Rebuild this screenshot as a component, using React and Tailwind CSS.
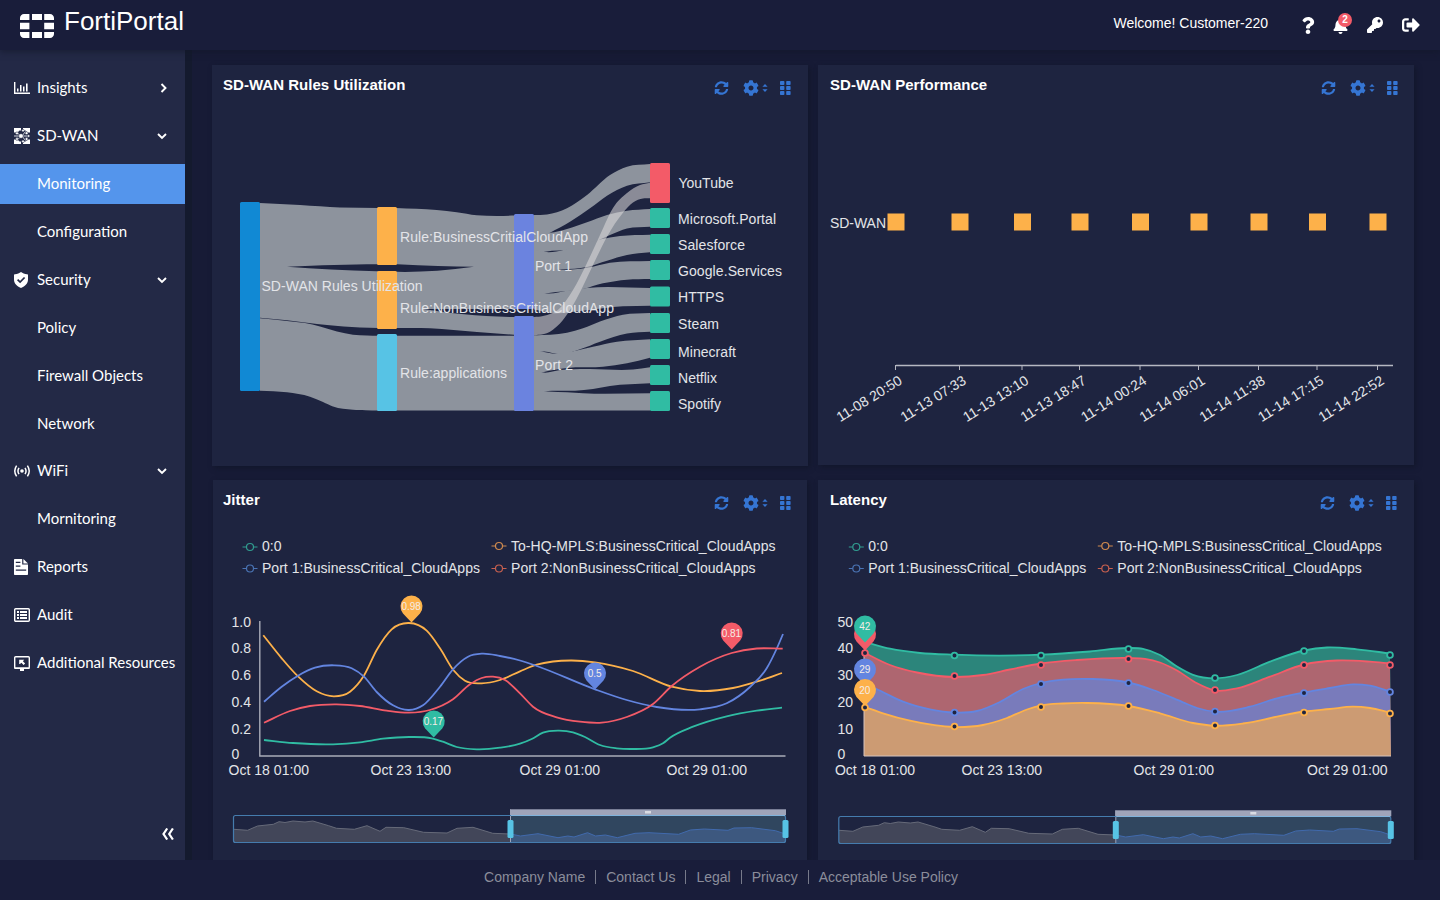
import { FaQuestion, FaBell, FaKey, FaSignOutAlt, FaSyncAlt, FaCog } from 'react-icons/fa';

// Smooth curve through a list of [x, y] points, ordered by x
const slope = (points, i) => {
  const at = (j) => (points[j + 1][1] - points[j][1]) / (points[j + 1][0] - points[j][0]);
  if (i === 0) return at(0);
  if (i === points.length - 1) return at(i - 1);
  const before = points[i][0] - points[i - 1][0];
  const after = points[i + 1][0] - points[i][0];
  return (at(i - 1) * after + at(i) * before) / (before + after);
};

const curve = (points) =>
  points
    .slice(1)
    .map(([x, y], i) => {
      const [x1, y1] = points[i];
      const h = (x - x1) / 3;
      return `C${x1 + h} ${y1 + h * slope(points, i)} ${x - h} ${y - h * slope(points, i + 1)} ${x} ${y}`;
    })
    .join(' ');

const line = (points) => `M${points[0].join(' ')} ${curve(points)}`;

const band = (top, bottom) => {
  const back = [...bottom].reverse();
  return `${line(top)} L${back[0].join(' ')} ${curve(back)} Z`;
};

const COLORS = {
  teal: '#30bca3',
  orange: '#fdb14a',
  blue: '#6385e0',
  red: '#f35b68',
};

/* ---------- sidebar icons ---------- */

const InsightsIcon = () => (
  <svg width="16" height="16" viewBox="0 0 16 16" fill="currentColor">
    <path d="M0 2h1.4v10.600H16V14H0z" />
    <path d="M3 8.600h1.500v3H3zM6 5h1.500v6.600H6zM9 6.600h1.500v5H9zM12 3.400h1.600v8.200H12z" />
  </svg>
);

const SdwanIcon = () => (
  <svg width="16" height="16" viewBox="0 0 16 16">
    <path
      d="M0 0h7v2.500H5.500L3.500 4.600H0zM9 0h7v4.600h-2.500L11.500 2.500H9zM0 11.400h3.500l2 2.100H7V16H0zM16 11.400h-2.500l-2 2.100H9V16h7z"
      fill="#fff"
    />
    <path d="M8 8L3 5M8 8H0M8 8l-5 3.500M8 8l3.500-4.500M8 8h7M8 8l3.500 4.500" stroke="#d5d8e0" strokeWidth="1" />
    <g fill="#fff" stroke="#232946" strokeWidth=".5">
      <circle cx="7" cy="8" r="2.300" />
      <circle cx="3" cy="5.300" r="1.400" />
      <circle cx="3" cy="11" r="1.400" />
      <circle cx="9" cy="2.600" r="1.300" />
      <circle cx="9" cy="13.400" r="1.300" />
      <circle cx="12.600" cy="5.200" r="1.400" />
      <circle cx="12.600" cy="11" r="1.400" />
      <circle cx="14.600" cy="8" r="1.200" />
    </g>
  </svg>
);

const ShieldIcon = () => (
  <svg width="14" height="16" viewBox="0 0 14 16" fill="none">
    <path
      d="M7 0c1.600 1.200 3.600 2 6 2.200.600 0 1 .400 1 1V7.600c0 3.800-2.800 6.900-7 8.400-4.200-1.500-7-4.600-7-8.400V3.200c0-.600.400-1 1-1C3.400 2 5.400 1.200 7 0z"
      fill="currentColor"
    />
    <path d="M3.600 7.600l2.500 2.500 4.500-4.600" stroke="#232946" strokeWidth="1.700" />
  </svg>
);

const WifiIcon = () => (
  <svg width="16" height="12" viewBox="0 0 16 12" fill="none" stroke="currentColor" strokeWidth="1.500">
    <circle cx="8" cy="6" r="1.800" fill="currentColor" stroke="none" />
    <path d="M5 2.800c-1.300 2-1.300 4.400 0 6.400M11 2.800c1.300 2 1.300 4.400 0 6.400M2.600.600c-2.300 3.400-2.300 7.400 0 10.800M13.400.600c2.300 3.400 2.300 7.400 0 10.800" />
  </svg>
);

const ReportsIcon = () => (
  <svg width="14" height="16" viewBox="0 0 14 16" fill="none">
    <path d="M1 0h7.200v5.600H14V15c0 .600-.400 1-1 1H1c-.600 0-1-.400-1-1V1c0-.600.400-1 1-1z" fill="currentColor" />
    <path d="M9.400 0L14 4.500H9.400z" fill="currentColor" />
    <path d="M1.800 3.400h4.600M1.800 7.200h4.600M1.800 11.200h10.400" stroke="#232946" strokeWidth="1.200" />
  </svg>
);

const AuditIcon = () => (
  <svg width="16" height="14" viewBox="0 0 16 14" fill="none" stroke="currentColor">
    <rect x=".700" y=".700" width="14.600" height="12.600" rx="1" strokeWidth="1.400" />
    <path d="M3 4h2M3 7h2M3 10h2M6 4h7M6 7h7M6 10h7" strokeWidth="1.900" />
  </svg>
);

const ResourcesIcon = () => (
  <svg width="16" height="15" viewBox="0 0 16 15" fill="none">
    <rect x=".700" y=".700" width="14.600" height="11.600" rx="1" stroke="currentColor" strokeWidth="1.400" />
    <path d="M.500 11.400h15v1.500H.500zM6 12.500h4V15H6z" fill="currentColor" />
    <path d="M5.200 3.800h5L8.900 5.200l2.200 2.200-1.500 1.500-2.200-2.200-1.400 1.300-.800.100z" fill="currentColor" />
  </svg>
);

const MENU = [
  { label: 'Insights', icon: InsightsIcon, arrow: 'right' },
  { label: 'SD-WAN', icon: SdwanIcon, arrow: 'down' },
  { label: 'Monitoring', active: true },
  { label: 'Configuration' },
  { label: 'Security', icon: ShieldIcon, arrow: 'down' },
  { label: 'Policy' },
  { label: 'Firewall Objects' },
  { label: 'Network' },
  { label: 'WiFi', icon: WifiIcon, arrow: 'down' },
  { label: 'Mornitoring' },
  { label: 'Reports', icon: ReportsIcon },
  { label: 'Audit', icon: AuditIcon },
  { label: 'Additional Resources', icon: ResourcesIcon },
];

const MenuArrow = ({ direction }) => (
  <svg width="10" height="10" viewBox="0 0 10 10" fill="none" stroke="currentColor" strokeWidth="1.900">
    <path d={direction === 'right' ? 'M4.500 1L8.500 5l-4 4' : 'M1 3l4 3.900L9 3'} />
  </svg>
);

const Logo = () => (
  <svg width="34" height="24" viewBox="0 0 34 24" fill="#fff">
    <path d="M4 0h5.400v6H0V4c0-2.200 1.800-4 4-4zM12 0h10v6H12zM24.200 0H30c2.200 0 4 1.800 4 4v2h-9.800zM0 8.700h9.400v6.600H0zM24.200 8.700H34v6.600h-9.800zM0 18h9.400v6H4c-2.200 0-4-1.800-4-4zM12 18h10v6H12zM24.200 18H34v2c0 2.200-1.800 4-4 4h-5.800z" />
  </svg>
);

const Header = () => (
  <header className="relative z-10 flex h-[50px] shrink-0 items-center justify-between bg-[#191d3a] pl-5 pr-5 shadow-[0_2px_6px_rgba(18,24,40,0.6)]">
    <div className="flex items-center gap-[10px]">
      <div className="pt-[2px]">
        <Logo />
      </div>
      <span className="pb-[9px] text-[26px] leading-none">FortiPortal</span>
    </div>
    <div className="flex items-center">
      <span className="mr-[32px] pb-[3px] text-[14px]">Welcome! Customer-220</span>
      <FaQuestion className="mr-[17px] h-[17px] w-[16px]" />
      <div className="relative mr-[19px]">
        <FaBell className="mt-px h-[16px] w-[15px]" />
        <span className="absolute -top-[4px] left-[5px] flex h-[14px] w-[14px] items-center justify-center rounded-full bg-[#f35b68] text-[10px] font-bold leading-none">
          2
        </span>
      </div>
      <FaKey className="mr-[19px] h-4 w-4" />
      <FaSignOutAlt className="h-[18px] w-[18px]" />
    </div>
  </header>
);

const Sidebar = () => (
  <aside className="flex w-[185px] shrink-0 flex-col bg-[#232946] pt-[14px] font-['Lato',sans-serif] text-[15px]">
    {MENU.map(({ label, icon: Icon, active, arrow }) => (
      <div key={label} className={label === 'WiFi' ? '-mt-px h-12 py-1' : 'h-12 py-1'}>
        <div className={`flex h-10 items-center pl-[14px] pr-[18px] ${active ? 'bg-[#5495ec]' : ''}`}>
          <span className="flex w-[23px] shrink-0">{Icon && <Icon />}</span>
          <span className="flex-1 whitespace-nowrap pb-[2px]">{label}</span>
          {arrow && <MenuArrow direction={arrow} />}
        </div>
      </div>
    ))}
    <svg className="mb-5 ml-auto mr-[11px] mt-auto" width="12" height="12" viewBox="0 0 12 12" fill="none" stroke="#fff" strokeWidth="2.200">
      <path d="M5.200.500L1.500 6l3.700 5.500M10.900.500L7.200 6l3.700 5.500" />
    </svg>
  </aside>
);

const Card = ({ title, className = '', headClass = 'pl-[11px] pr-[17px]', children }) => (
  <section className={`bg-[#1e2440] shadow-[2px_2px_5px_rgba(16,21,38,0.7)] ${className}`}>
    <div className={`flex h-[41px] items-start justify-between ${headClass}`}>
      <h2 className="pt-[9px] text-[15px] font-bold leading-[22px] tracking-[0.03px]">{title}</h2>
      <div className="flex items-center pt-[15px] text-[#3575d3]">
        <FaSyncAlt className="mr-[14px] h-[14px] w-[15px]" />
        <FaCog className="mr-[3px] h-4 w-4" />
        <svg className="mr-[12px]" width="6" height="8" viewBox="0 0 6 8" fill="currentColor">
          <path d="M3 0l2.600 2.800H.400zM3 8L.400 5.200h5.200z" />
        </svg>
        <svg width="11" height="14" viewBox="0 0 11 14" fill="currentColor">
          {[0, 5, 10].map((y) => (
            <g key={y}>
              <rect x="0" y={y} width="4.400" height="4" rx=".800" />
              <rect x="6.200" y={y} width="4.400" height="4" rx=".800" />
            </g>
          ))}
        </svg>
      </div>
    </div>
    {children}
  </section>
);

const Label = ({ x, y, w, children, ...rest }) => (
  <text x={x} y={y - 0.5} textLength={w} fontSize="14" fill="#e3e4e8" {...rest}>
    {children}
  </text>
);

/* ---------- SD-WAN rules sankey ---------- */

const LINK = '#8d939d';

const LINKS = [
  // root to rules
  band(
    [[260, 203], [300, 205], [340, 207.500], [378, 208]],
    [[260, 390.700], [287, 392.300], [310, 396.700], [323, 402], [333, 406.500], [353, 409.700], [378, 410.500]]
  ),
  // rules to ports
  band(
    [[396, 208], [436.700, 210], [456.700, 212.300], [476.700, 215.300], [496.700, 216], [515, 215.500]],
    [[396, 410.500], [515, 410.500]]
  ),
  // port 1
  band(
    [[534, 215], [547, 214.500], [567, 208.300], [587, 195], [610, 175], [627, 166.700], [650, 164]],
    [[534, 241], [550, 232.700], [570, 221.700], [590, 208.300], [607, 195.700], [627, 185.700], [650, 182.300]]
  ),
  band(
    [[534, 232], [550, 232.700], [567, 229], [587, 222.300], [607, 215], [627, 210.700], [650, 209]],
    [[534, 254], [545, 251.700], [573, 249], [590, 244], [610, 235], [627, 228.500], [650, 226.700]]
  ),
  band(
    [[534, 250], [545, 252], [580, 245.500], [600, 239.500], [620, 236], [650, 234.700]],
    [[534, 272], [562, 269.500], [587, 267], [607, 260.700], [627, 255], [650, 252.300]]
  ),
  band(
    [[534, 268], [562, 270], [587, 267.800], [610, 262.700], [650, 261]],
    [[534, 296], [547, 293.300], [583, 289], [603, 283.300], [627, 279.700], [650, 279]]
  ),
  band(
    [[534, 290], [547, 293.500], [567, 290.700], [587, 288], [650, 288]],
    [[534, 310], [550, 313], [583, 310.700], [623, 306.300], [650, 305.700]]
  ),
  // port 2
  band(
    [[534, 335.500], [567, 332.700], [583, 328.300], [600, 321.500], [623, 314.700], [650, 313]],
    [[534, 353], [544, 351.500], [560, 354.300], [580, 349.300], [600, 341.700], [627, 333.500], [650, 331.700]]
  ),
  band(
    [[534, 350], [544, 352], [555, 353.800], [567, 352.300], [593, 346.700], [617, 341.700], [650, 339.300]],
    [[534, 375], [543, 372.300], [567, 368], [603, 366.700], [627, 363.300], [650, 357.700]]
  ),
  band(
    [[534, 370], [543, 372.500], [560, 370], [587, 369], [633, 369.500], [650, 367.300]],
    [[534, 393], [548, 391], [575, 390.700], [593, 389], [610, 386], [650, 383.300]]
  ),
  band(
    [[534, 390], [548, 391.500], [567, 392.300], [583, 393.300], [650, 393.300]],
    [[534, 410.500], [650, 410.500]]
  ),
];

const GAPS = [
  'M287 266.700 C320 265.500 350 264.300 377 264.300 L397 264.300 Q440 266.400 474 266.700 Q430 272.600 397 271.800 L377 271.300 Q330 270 287 266.700Z',
  band(
    [[260, 317.800], [287, 320.300], [327, 325], [360, 327.500], [397, 328], [430, 328.300], [477, 332], [514, 334.700]],
    [[260, 318.200], [287, 320.900], [305, 323], [320, 326.500], [337, 331.500], [353, 334.700], [367, 335.600], [397, 335.700], [514, 335.700]]
  ),
  'M424 309 C450 308.800 480 309 514 309 L534 309.500 L550 313 Q543 317 534 317 L514 317 C480 316.500 450 313.500 424 309Z',
];

const NODES = [
  [240, 202, 189, '#1189d4'],
  [377, 207, 58, COLORS.orange],
  [377, 271, 58, COLORS.orange],
  [377, 334, 77, '#57c3e5'],
  [514, 214, 95, '#6b83df'],
  [514, 316, 95, '#6b83df'],
  [650, 163, 40, COLORS.red],
  [650, 208, 20, COLORS.teal],
  [650, 234, 20, COLORS.teal],
  [650, 260, 20, COLORS.teal],
  [650, 286.500, 20, COLORS.teal],
  [650, 313, 20, COLORS.teal],
  [650, 339, 20, COLORS.teal],
  [650, 365, 20, COLORS.teal],
  [650, 391, 20, COLORS.teal],
];

const NODE_LABELS = [
  ['SD-WAN Rules Utilization', 261.500, 291.500, 161],
  ['Rule:BusinessCritialCloudApp', 400, 242, 188],
  ['Rule:NonBusinessCritialCloudApp', 400, 313.500, 214],
  ['Rule:applications', 400, 378, 107],
  ['Port 1', 535, 271, 37],
  ['Port 2', 535, 370, 38],
  ['YouTube', 678.500, 188, 55],
  ['Microsoft.Portal', 678, 224, 98],
  ['Salesforce', 678, 250, 67],
  ['Google.Services', 678, 276, 104],
  ['HTTPS', 678, 302.500, 46],
  ['Steam', 678, 329, 41],
  ['Minecraft', 678, 357, 58],
  ['Netflix', 678, 383, 39],
  ['Spotify', 678, 409, 43],
];

const RulesChart = () => (
  <svg className="block" width="596" height="360" viewBox="212 106 596 360">
    {LINKS.map((d) => (
      <path key={d} d={d} fill={LINK} />
    ))}
    {GAPS.map((d) => (
      <path key={d} d={d} fill="#1e2440" />
    ))}
    <path
      d={band(
        [[534, 317], [543, 316], [560, 308], [573, 290], [587, 263], [600, 235], [613, 208], [627, 193], [640, 185], [650, 182.700]],
        [[534, 335.500], [550, 331.700], [563, 320], [577, 298], [593, 265], [607, 236.700], [623, 212.700], [633, 202.500], [643, 198.500], [650, 198.300]]
      )}
      fill="rgba(220,218,218,0.57)"
    />
    {NODES.map(([x, y, h, fill]) => (
      <rect key={`${x}-${y}`} x={x} y={y} width="20" height={h} rx="1.500" fill={fill} />
    ))}
    {NODE_LABELS.map(([text, x, y, w]) => (
      <Label key={text} x={x} y={y} w={w}>
        {text}
      </Label>
    ))}
  </svg>
);

/* ---------- SD-WAN performance ---------- */

const PERFORMANCE = [
  ['11-08 20:50', 896],
  ['11-13 07:33', 960],
  ['11-13 13:10', 1022.500],
  ['11-13 18:47', 1080],
  ['11-14 00:24', 1140.500],
  ['11-14 06:01', 1199],
  ['11-14 11:38', 1259],
  ['11-14 17:15', 1317.500],
  ['11-14 22:52', 1378],
];

const PerformanceChart = () => (
  <svg className="block" width="596" height="359" viewBox="818 106 596 359">
    <Label x={830} y={228} w={56}>SD-WAN</Label>
    <path d="M896 365.500H1393" stroke="#b6b8c2" strokeWidth="1.300" />
    {PERFORMANCE.map(([time, x]) => (
      <g key={time}>
        <rect x={x - 8.500} y="213.500" width="17" height="17" fill={COLORS.orange} />
        <path d={`M${x - 0.500} 365v5`} stroke="#b6b8c2" />
        <Label x={x + 7} y={383.500} w={74} textAnchor="end" transform={`rotate(-32 ${x + 7} 383)`}>
          {time}
        </Label>
      </g>
    ))}
  </svg>
);

/* ---------- shared chart parts ---------- */

const LEGEND = [
  ['0:0', 250, 547, 19.500, '#319d90'],
  ['To-HQ-MPLS:BusinessCritical_CloudApps', 499, 546, 264.500, '#d08a4e'],
  ['Port 1:BusinessCritical_CloudApps', 250, 568.500, 218, '#4a74b4'],
  ['Port 2:NonBusinessCritical_CloudApps', 499, 568.500, 244.500, '#c8604f'],
];

const Legend = ({ dx = 0 }) =>
  LEGEND.map(([text, x, y, w, color]) => (
    <g key={text} transform={`translate(${dx} 0)`}>
      <path d={`M${x - 7.500} ${y}h4M${x + 3.500} ${y}h4`} stroke={color} strokeWidth="1.200" />
      <circle cx={x} cy={y} r="3.500" fill="none" stroke={color} strokeWidth="1.200" />
      <Label x={x + 12} y={y > 560 ? 573.500 : 551.500} w={w}>
        {text}
      </Label>
    </g>
  ));

const Pin = ({ x, y, color, children }) => (
  <g>
    <path
      d={`M${x} ${y + 15.500}L${x - 8.500} ${y + 6.500}A11 11 0 1 1 ${x + 8.500} ${y + 6.500}Z`}
      fill={color}
    />
    <text x={x - 0.300} y={y + 3} fontSize="10" textAnchor="middle" fill="#f4ece6">
      {children}
    </text>
  </g>
);

const SPARK = [
  [233.700, 829.300], [247.600, 830.300], [257.500, 826], [273.300, 824.300], [279, 821.700], [285, 822.500], [293, 821],
  [305, 822], [312.800, 821], [328.600, 825.700], [336.500, 828.300], [354.300, 829.300], [367, 825.700], [380, 831.300],
  [386, 827.300], [403.800, 827.700], [423.500, 832.300], [447, 833], [457, 828.300], [473, 827.300], [492.700, 833.300],
  [510.500, 834], [520.400, 836], [538, 833.700], [558, 837.700], [567.800, 836], [574, 837], [587.600, 832.700],
  [595.500, 836], [605.400, 835], [617.300, 837.700], [635, 833.300], [649, 832.700], [678.600, 834.300], [690.400, 830],
  [704.300, 829], [728, 830.300], [734, 828], [751.700, 827.700], [775.400, 830.700], [785.300, 834],
];

const sparkline = (points) => `M${points.map((p) => p.join(' ')).join('L')}`;

const ZoomSlider = ({ dx = 0, dy = 0 }) => {
  const left = sparkline(SPARK.slice(0, 22));
  const right = sparkline(SPARK.slice(21));
  return (
    <g transform={`translate(${dx} ${dy})`}>
      <path d={`${left}V842.500H233.700Z`} fill="#424659" />
      <path d={left} fill="none" stroke="#666a79" strokeLinejoin="round" />
      <rect x="510.500" y="815.500" width="275" height="27" fill="#30465f" />
      <path d={`${right}V842.500H510.500Z`} fill="#3d587f" />
      <path d={right} fill="none" stroke="#416aad" strokeLinejoin="round" />
      <rect x="510" y="809.300" width="276" height="6" fill="#9fa4b9" />
      <rect x="645" y="811" width="6" height="2.500" fill="#d9dbe2" />
      <path d="M510.500 809.500V842.500" stroke="#9fa4b9" />
      <rect x="233.500" y="815.500" width="552" height="27" rx="2" fill="none" stroke="#457cae" strokeWidth="1.200" />
      <path d="M511 815.500H785" stroke="#7fb3dc" />
      <rect x="507.500" y="820" width="6" height="18" rx="1.500" fill="#57c3e5" />
      <rect x="782.500" y="820" width="6" height="18" rx="1.500" fill="#57c3e5" />
    </g>
  );
};

const TICK_Y = [627.500, 653.500, 680.500, 707.500, 734, 759.500];

/* ---------- jitter ---------- */

const JITTER = [
  [
    COLORS.orange,
    [
      [263.300, 635.300], [281.700, 658.300], [298.300, 676.700], [316.700, 691.300], [334, 696.300], [350, 691.700],
      [364.300, 675], [376.700, 650], [391.700, 629.300], [409, 623], [426.700, 630.700], [440, 648.300], [453.300, 670],
      [465, 680.700], [481.700, 683.300], [500, 680], [520, 671.300], [536.700, 664.700], [553, 661.500], [571.700, 660.500],
      [595, 662.300], [633, 671], [671.700, 686.700], [700, 691], [733, 688], [760, 680.700], [782, 673],
    ],
  ],
  [
    COLORS.blue,
    [
      [264, 701.700], [281.700, 686.700], [298, 675.700], [315, 667.700], [334, 665.300], [351.700, 668.300], [364, 676.700],
      [376.700, 692], [393, 705.300], [409, 710], [423, 705.300], [440, 686.700], [453, 669.300], [468, 656.700],
      [481.700, 653.700], [500, 656], [520, 660.500], [536.700, 666], [595, 689.300], [626.700, 700], [656.700, 707],
      [700, 709.300], [726.700, 703.300], [750, 687], [766.700, 668.300], [777, 648], [783, 634],
    ],
  ],
  [
    COLORS.teal,
    [
      [264, 740], [293, 743], [333, 744.300], [360, 742.300], [383, 738.700], [409, 737], [431.700, 738.300],
      [443, 741.700], [456.700, 747], [476.700, 749.300], [500, 747.700], [520, 743.700], [531.700, 739], [543, 732.700],
      [558, 730.700], [573, 732.300], [585, 737], [600, 745], [616.700, 748.300], [633, 749], [653, 747.300],
      [663, 743.300], [670, 737.700], [693, 726.700], [726.700, 716.300], [756.700, 710.700], [782, 707.700],
    ],
  ],
  [
    COLORS.red,
    [
      [264, 722.700], [290, 711], [310, 706], [336.700, 704.300], [360, 706], [386.700, 710.700], [409, 712.700],
      [430, 710], [453, 699.300], [470, 684.300], [481.700, 678], [493, 676.700], [505, 680], [520, 693.300],
      [533, 706.700], [556.700, 717.300], [580, 721.700], [601.700, 722.700], [626.700, 717], [653, 704], [671.700, 686],
      [700, 666.700], [731.700, 653], [756.700, 648.500], [782.700, 648.700],
    ],
  ],
];

const JitterChart = () => (
  <svg className="block" width="594" height="339" viewBox="213 521 594 339">
    <Legend />
    {['1.0', '0.8', '0.6', '0.4', '0.2', '0'].map((t, i) => (
      <Label key={t} x={231.500} y={TICK_Y[i]}>
        {t}
      </Label>
    ))}
    <path d="M259.800 621V756H785.500" fill="none" stroke="#a9acb8" strokeWidth="1.400" />
    {JITTER.map(([color, points]) => (
      <path key={color} d={line(points)} fill="none" stroke={color} strokeWidth="1.800" />
    ))}
    <Pin x={411.500} y={607} color={COLORS.orange}>0.98</Pin>
    <Pin x={433.700} y={722} color={COLORS.teal}>0.17</Pin>
    <Pin x={595} y={674} color={COLORS.blue}>0.5</Pin>
    <Pin x={731.700} y={634} color={COLORS.red}>0.81</Pin>
    <Label x={228.500} y={775} w={80.500}>Oct 18 01:00</Label>
    <Label x={370.500} y={775} w={80.500}>Oct 23 13:00</Label>
    <Label x={519.500} y={775} w={80.500}>Oct 29 01:00</Label>
    <Label x={666.500} y={775} w={80.500}>Oct 29 01:00</Label>
    <ZoomSlider />
  </svg>
);

/* ---------- latency ---------- */

const LATENCY = [
  {
    color: COLORS.teal,
    fill: '#2c857b',
    points: [
      [865, 642], [890, 648.700], [920, 653], [954, 654.700], [1041, 654.700], [1090, 651.500], [1128.500, 648],
      [1143, 648.800], [1160, 655], [1177, 666.500], [1193, 674.800], [1215, 678.300], [1237, 675], [1270, 661.700],
      [1304, 650.500], [1327, 647.500], [1357, 649.300], [1390, 653.500],
    ],
    dots: [655.500, 655.500, 649, 678, 651, 655],
  },
  {
    color: COLORS.red,
    fill: '#ae6670',
    points: [
      [865, 653], [890, 665], [917, 672.500], [954, 677], [983, 675], [1010, 669.500], [1041, 663.500], [1077, 660],
      [1128.500, 658], [1145, 658.800], [1160, 662.500], [1177, 670.500], [1197, 683.300], [1215, 690.500], [1237, 688.300],
      [1270, 676.700], [1304, 664.500], [1337, 660.500], [1370, 661.700], [1390, 663.500],
    ],
    dots: [676, 665, 659, 690, 665, 665],
  },
  {
    color: COLORS.blue,
    fill: '#797bbb',
    points: [
      [865, 684], [877, 689.300], [903, 701.700], [930, 709.300], [954, 712.500], [977, 711], [1000, 702],
      [1023, 689], [1041, 683], [1063, 679.700], [1093, 679], [1128.500, 682.500], [1153, 690], [1183, 702.300],
      [1197, 708], [1215, 711.700], [1250, 706.700], [1277, 698.300], [1304, 692.500], [1330, 688], [1353, 684.300],
      [1370, 685.700], [1390, 691.500],
    ],
    dots: [712.500, 684, 683, 711.500, 693, 692],
  },
  {
    color: COLORS.orange,
    fill: '#cc9b73',
    points: [
      [865, 707], [883, 713.300], [910, 720.700], [954, 727], [983, 725], [1007, 718], [1027, 709.500], [1041, 705.500],
      [1063, 703.500], [1087, 703], [1128.500, 706], [1160, 713.300], [1193, 723], [1215, 725.700], [1243, 723.500],
      [1277, 716.700], [1304, 711.500], [1330, 709], [1353, 706.700], [1370, 708], [1390, 712.500],
    ],
    dots: [726.500, 707, 706, 725.500, 712.500, 713.500],
  },
];

const DOT_X = [954.500, 1041, 1128.500, 1215, 1304, 1390];

const Dot = ({ x, y, color }) => <circle cx={x} cy={y} r="2.900" fill="#1e2440" stroke={color} strokeWidth="1.800" />;

const LatencyChart = () => (
  <svg className="block" width="596" height="339" viewBox="818 521 596 339">
    <Legend dx={606.300} />
    {['50', '40', '30', '20', '10', '0'].map((t, i) => (
      <Label key={t} x={837.500} y={TICK_Y[i]}>
        {t}
      </Label>
    ))}
    {LATENCY.map(({ color, fill, points }) => (
      <g key={color}>
        <path d={`${line(points)}L1391 756H864V${points[0][1]}Z`} fill={fill} />
        <path d={line(points)} fill="none" stroke={color} strokeWidth="1.800" />
      </g>
    ))}
    <path d="M864 650V756H1391" fill="none" stroke="#d6c3bd" strokeWidth="1" />
    {LATENCY.map(({ color, dots }) =>
      dots.map((y, i) => <Dot key={`${color}-${i}`} x={DOT_X[i]} y={y} color={color} />)
    )}
    <Pin x={865} y={635} color={COLORS.red} />
    <Pin x={865} y={627} color={COLORS.teal}>42</Pin>
    <Dot x={865} y={653} color={COLORS.red} />
    <Pin x={865} y={670} color={COLORS.blue}>29</Pin>
    <Pin x={865} y={690.500} color={COLORS.orange}>20</Pin>
    <Dot x={865} y={707.500} color={COLORS.orange} />
    <Label x={835} y={775} w={80}>Oct 18 01:00</Label>
    <Label x={961.500} y={775} w={80.500}>Oct 23 13:00</Label>
    <Label x={1133.500} y={775} w={80.500}>Oct 29 01:00</Label>
    <Label x={1307} y={775} w={80.500}>Oct 29 01:00</Label>
    <ZoomSlider dx={605.300} dy={1} />
  </svg>
);

const FOOTER_LINKS = ['Company Name', 'Contact Us', 'Legal', 'Privacy', 'Acceptable Use Policy'];

const Footer = () => (
  <footer className="flex h-10 shrink-0 items-start justify-center bg-[#191d3a] pl-[2px] pt-[7px] text-[14px] leading-5 text-[#8b8d9b]">
    {FOOTER_LINKS.map((link, i) => (
      <div key={link} className="flex items-center">
        {i > 0 && <span className="mx-[10px] h-[14px] w-px bg-[#777a8a]" />}
        <span>{link}</span>
      </div>
    ))}
  </footer>
);

const App = () => (
  <div className="flex h-[900px] w-[1440px] flex-col overflow-hidden bg-[#171b36] font-['Liberation_Sans',Arial,sans-serif] text-white">
    <Header />
    <div className="flex h-[810px]">
      <Sidebar />
      <div className="w-[7px] shrink-0 bg-[#141a2e]" />
      <main className="grid flex-1 grid-cols-[596px_596px] content-start gap-x-[10px] gap-y-[14px] overflow-hidden pl-5 pt-[15px]">
        <Card title="SD-WAN Rules Utilization" className="h-[401px]">
          <RulesChart />
        </Card>
        <Card title="SD-WAN Performance" className="h-[400px]" headClass="pl-3 pr-4">
          <PerformanceChart />
        </Card>
        <Card title="Jitter" className="mx-px h-[380px]" headClass="pl-[10px] pr-4">
          <JitterChart />
        </Card>
        <Card title="Latency" className="h-[380px]" headClass="pl-3 pr-[17px]">
          <LatencyChart />
        </Card>
      </main>
    </div>
    <Footer />
  </div>
);

export default App;
